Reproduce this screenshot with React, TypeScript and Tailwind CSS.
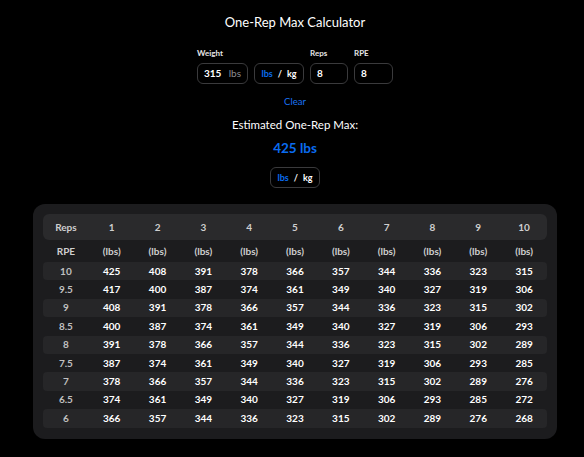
import { useState } from 'react';

const REPS = [1, 2, 3, 4, 5, 6, 7, 8, 9, 10];
const RPES = ['10', '9.5', '9', '8.5', '8', '7.5', '7', '6.5', '6'];

const TABLE: number[][] = [
  [425, 408, 391, 378, 366, 357, 344, 336, 323, 315],
  [417, 400, 387, 374, 361, 349, 340, 327, 319, 306],
  [408, 391, 378, 366, 357, 344, 336, 323, 315, 302],
  [400, 387, 374, 361, 349, 340, 327, 319, 306, 293],
  [391, 378, 366, 357, 344, 336, 323, 315, 302, 289],
  [387, 374, 361, 349, 340, 327, 319, 306, 293, 285],
  [378, 366, 357, 344, 336, 323, 315, 302, 289, 276],
  [374, 361, 349, 340, 327, 319, 306, 293, 285, 272],
  [366, 357, 344, 336, 323, 315, 302, 289, 276, 268],
];

function UnitToggle({ unit, onChange }: { unit: 'lbs' | 'kg'; onChange: (u: 'lbs' | 'kg') => void }) {
  return (
    <div className="flex h-[21px] w-[50px] items-center justify-center gap-[5px] rounded-[6px] border border-[#3a3a3c] text-[9px] font-bold">
      <button onClick={() => onChange('lbs')} className={unit === 'lbs' ? 'text-[#0a6cf0]' : 'text-white'}>
        lbs
      </button>
      <span className="text-white">/</span>
      <button onClick={() => onChange('kg')} className={unit === 'kg' ? 'text-[#0a6cf0]' : 'text-white'}>
        kg
      </button>
    </div>
  );
}

export default function App() {
  const [unit, setUnit] = useState<'lbs' | 'kg'>('lbs');
  const [outUnit, setOutUnit] = useState<'lbs' | 'kg'>('lbs');

  return (
    <div className="min-h-[457px] w-full bg-black pl-[6px] text-white" style={{ fontFamily: 'Lato, "Noto Sans", sans-serif' }}>
      <div className="flex flex-col items-center pt-[13px]">
        <h1 className="text-[13px] leading-[18px] font-normal">One-Rep Max Calculator</h1>

        {/* inputs */}
        <div className="mt-[17px] flex items-end gap-[6px]">
          <div className="flex flex-col">
            <label className="mb-[4px] text-[8px] leading-[11px] font-bold text-[#e5e5e5]">Weight</label>
            <div className="flex h-[21px] w-[51px] items-center justify-between rounded-[6px] border border-[#3a3a3c] px-[6px] text-[10px]">
              <span className="font-bold">315</span>
              <span className="text-[#8e8e93]">lbs</span>
            </div>
          </div>
          <UnitToggle unit={unit} onChange={setUnit} />
          <div className="flex flex-col">
            <label className="mb-[4px] text-[8px] leading-[11px] font-bold text-[#e5e5e5]">Reps</label>
            <div className="flex h-[21px] w-[38px] items-center rounded-[6px] border border-[#3a3a3c] px-[6px] text-[10px] font-bold">8</div>
          </div>
          <div className="flex flex-col">
            <label className="mb-[4px] text-[8px] leading-[11px] font-bold text-[#e5e5e5]">RPE</label>
            <div className="flex h-[21px] w-[39px] items-center rounded-[6px] border border-[#3a3a3c] px-[6px] text-[10px] font-bold">8</div>
          </div>
        </div>

        <button className="mt-[11px] text-[9.5px] leading-[14px] text-[#1a73f5]">Clear</button>
        <div className="mt-[8px] text-[11.5px] leading-[16px]">Estimated One-Rep Max:</div>
        <div className="mt-[5px] text-[13.5px] leading-[20px] font-bold text-[#0a6cf0]">425 lbs</div>
        <div className="mt-[9px]">
          <UnitToggle unit={outUnit} onChange={setOutUnit} />
        </div>
      </div>

      {/* table card */}
      <div className="mx-[27px] mt-[16px] rounded-[12px] bg-[#1c1c1e] px-[10px] pt-[10px] pb-[11px]">
        <div className="grid h-[26px] grid-cols-11 items-center rounded-[6px] bg-[#2a2a2c] text-[10px] font-bold text-[#cfcfcf]">
          <div className="text-center">Reps</div>
          {REPS.map((r) => (
            <div key={r} className="text-center">{r}</div>
          ))}
        </div>
        <div className="grid h-[22px] grid-cols-11 items-center text-[10px] font-bold text-[#cfcfcf]">
          <div className="text-center">RPE</div>
          {REPS.map((r) => (
            <div key={r} className="text-center">({outUnit})</div>
          ))}
        </div>
        {TABLE.map((row, i) => (
          <div
            key={RPES[i]}
            className={`grid h-[18.4px] grid-cols-11 items-center rounded-[4px] text-[10px] font-bold ${i % 2 === 0 ? 'bg-[#262628]' : ''}`}
          >
            <div className="text-center text-[#c0c0c0]">{RPES[i]}</div>
            {row.map((v, j) => (
              <div key={j} className="text-center text-white">{v}</div>
            ))}
          </div>
        ))}
      </div>
    </div>
  );
}
